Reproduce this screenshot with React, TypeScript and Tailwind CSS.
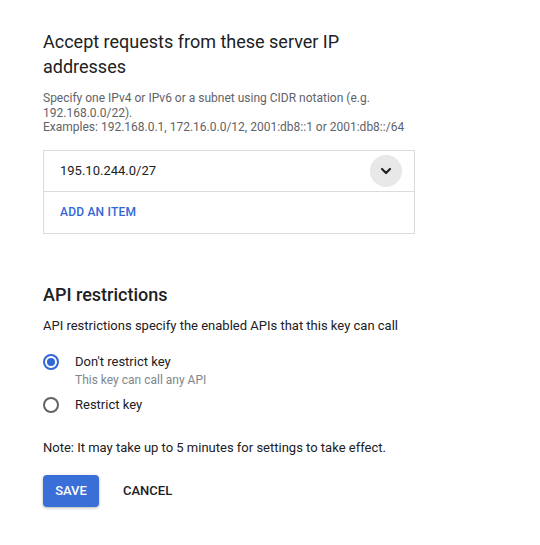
import { useState } from 'react';

export default function App() {
  const [restrict, setRestrict] = useState(false);

  return (
    <div className="w-[540px] h-[545px] bg-white text-[#202124] font-['Roboto',sans-serif]">
      <div className="pl-[43px] pr-[125px] pt-[29px]">
        <h2 className="text-[18px] leading-[25px] font-normal">
          Accept requests from these server IP addresses
        </h2>
        <p className="mt-[12px] text-[12px] leading-[14.5px] text-[#5f6368]">
          Specify one IPv4 or IPv6 or a subnet using CIDR notation (e.g. 192.168.0.0/22).
          <br />
          Examples: 192.168.0.1, 172.16.0.0/12, 2001:db8::1 or 2001:db8::/64
        </p>

        {/* IP list */}
        <div className="mt-[15px] w-[372px] border border-[#dadce0]">
          <div className="h-[41px] flex items-center justify-between pl-[16px] pr-[12px] border-b border-[#dadce0]">
            <span className="text-[13px]">195.10.244.0/27</span>
            <button className="w-[32px] h-[32px] rounded-full bg-[#e8e8e8] flex items-center justify-center">
              <svg width="16" height="16" viewBox="0 0 24 24" fill="none" stroke="#202124" strokeWidth="3.2" strokeLinecap="round" strokeLinejoin="round">
                <path d="M6 9l6 6 6-6" />
              </svg>
            </button>
          </div>
          <div className="h-[41px] flex items-center pl-[16px]">
            <button className="text-[12px] font-medium text-[#3367d6] tracking-[0.2px]">ADD AN ITEM</button>
          </div>
        </div>

        {/* API restrictions */}
        <h2 className="mt-[49px] text-[18px] leading-[24px] font-medium">API restrictions</h2>
        <p className="mt-[10px] text-[13px] leading-[18px]">API restrictions specify the enabled APIs that this key can call</p>

        <div className="mt-[18px] space-y-[6px]">
          <label className="flex items-start gap-[16px] cursor-pointer" onClick={() => setRestrict(false)}>
            <Radio checked={!restrict} />
            <div>
              <div className="text-[13px] leading-[18px]">Don't restrict key</div>
              <div className="text-[12px] leading-[19px] text-[#80868b]">This key can call any API</div>
            </div>
          </label>
          <label className="flex items-start gap-[16px] cursor-pointer" onClick={() => setRestrict(true)}>
            <Radio checked={restrict} />
            <div className="text-[13px] leading-[18px]">Restrict key</div>
          </label>
        </div>

        <p className="mt-[25px] text-[13px] leading-[18px]">Note: It may take up to 5 minutes for settings to take effect.</p>

        <div className="mt-[18px] flex items-center gap-[8px]">
          <button className="w-[56px] h-[32px] rounded-[4px] bg-[#3b6fd8] text-white text-[13px] font-medium shadow-[0_1px_3px_rgba(0,0,0,0.3)]">
            SAVE
          </button>
          <button className="h-[32px] px-[16px] text-[13px] font-medium text-[#202124]">CANCEL</button>
        </div>
      </div>
    </div>
  );
}

function Radio({ checked }: { checked: boolean }) {
  return (
    <span
      className={`mt-px w-[16px] h-[16px] shrink-0 rounded-full border-2 flex items-center justify-center ${
        checked ? 'border-[#3367d6]' : 'border-[#5f6368]'
      }`}
    >
      {checked && <span className="w-[8px] h-[8px] rounded-full bg-[#3367d6]" />}
    </span>
  );
}
